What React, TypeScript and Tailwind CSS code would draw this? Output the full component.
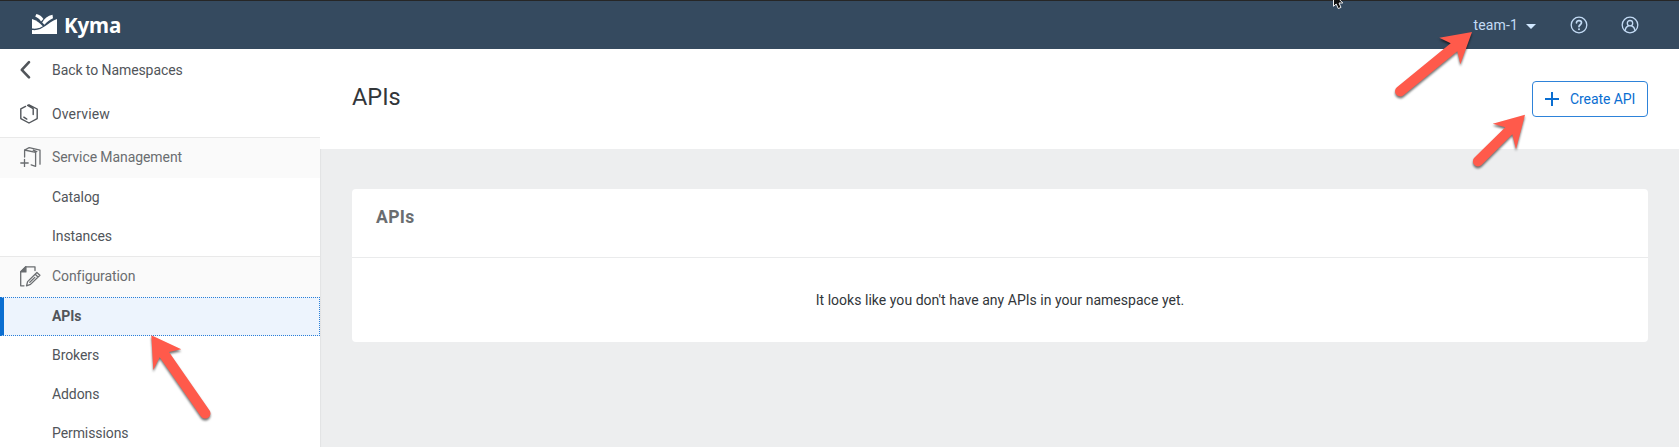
import type { ReactNode } from "react";

const stroke = {
  fill: "none",
  stroke: "currentColor",
  strokeWidth: 1.3,
  strokeLinecap: "round" as const,
  strokeLinejoin: "round" as const,
};

function BackIcon() {
  return (
    <svg width="20" height="20" viewBox="0 0 20 20" {...stroke} strokeWidth={2.6}>
      <path d="M9 2.2 1.8 9.9 9 17.4" />
    </svg>
  );
}

function OverviewIcon() {
  return (
    <svg width="20" height="20" viewBox="0 0 20 20" {...stroke} strokeWidth={1.4}>
      <path d="M5.6 2.4 .8 4.9V14.6L9 19 17.2 14.6V5L9 .8 7.6 1.5 13.2 4.6V10.6M3.8 13.2 6.8 15.1" />
    </svg>
  );
}

function ServiceIcon() {
  return (
    <svg width="21" height="20" viewBox="0 0 21 20" {...stroke}>
      <path d="M4.6 10V3L15.6 5.3V19.3L11.2 17.8M4.6 3 9.2 .7 20 3.1V17.2M16.8 4.6 13.2 3.2M.8 16H8.2M4.5 12.3V19.7" />
    </svg>
  );
}

function ConfigurationIcon() {
  return (
    <svg width="21" height="21" viewBox="0 0 21 21" {...stroke}>
      <path d="M15 4.5V.8H5.8L.7 5.8V19.8H4" />
      <path d="M5.9 .8V5.9H.7Z" fill="currentColor" />
      <path d="M7.6 15.6 16.9 6.5 19.9 9.2 10.5 18.4 6.5 19.8ZM15.2 8.2 18 11M9.8 16.3 14.8 11.4" />
    </svg>
  );
}

function Logo() {
  return (
    <svg width="25" height="20" viewBox="0 0 25 20" fill="#fff">
      <path d="M0 5C4.5 6.2 8 9.4 10.8 12.3C7.8 14.2 4.2 15 0 14.6Z" />
      <path d="M3.2 2.6 4.4 0C7.6 .5 9.9 2.6 11.4 5.1L9 7.4C7.6 5.4 5.7 3.6 3.2 2.6Z" />
      <path d="M10.2 8.5C12.3 4.6 15.7 1.7 20.5 .8L21 4.2C17.8 5.6 14.8 7.7 12.4 10.8Z" />
      <path d="M25 5V20H0V16C10.8 17.3 14.5 9 25 5Z" />
    </svg>
  );
}

function HelpIcon() {
  return (
    <svg width="18" height="18" viewBox="0 0 18 18" {...stroke}>
      <circle cx="9" cy="9" r="7.8" />
      <path d="M6.5 6.8C6.5 3.8 11.5 3.9 11.5 6.8C11.5 8.7 9 8.7 9 10.6" strokeWidth={1.7} />
      <path d="M9 13.1V13.3" strokeWidth={1.9} />
    </svg>
  );
}

function UserIcon() {
  return (
    <svg width="18" height="18" viewBox="0 0 18 18" {...stroke}>
      <circle cx="9" cy="9" r="7.8" />
      <circle cx="9" cy="7.2" r="2.7" />
      <path d="M4.2 14.3C4.4 11.4 6.2 10.2 7.6 9.6M10.4 9.6C11.8 10.2 13.6 11.4 13.8 14.3" />
    </svg>
  );
}

function Heading({ icon, children }: { icon: ReactNode; children: ReactNode }) {
  return (
    <div className="flex h-[41px] items-center border-t border-[#e9e9e9] bg-[#fafafa] pb-[2px] pl-5 text-[#6a6d70]">
      <span className="w-8 shrink-0">{icon}</span>
      {children}
    </div>
  );
}

function Item({ children }: { children: ReactNode }) {
  return <div className="flex h-[39px] items-center pl-[52px]">{children}</div>;
}

function Annotations() {
  return (
    <svg
      className="pointer-events-none absolute left-0 top-0"
      width="1679"
      height="447"
      viewBox="0 0 1679 447"
    >
      <g fill="#ff5a4b" className="drop-shadow-[0_2px_1px_rgba(0,0,0,0.55)]">
        <path d="M151.3 335.3 181.3 349.3 169 352 209.6 410.5A5.2 5.2 0 0 1 200.8 416.2L159.7 357.3 153.3 370Z" />
        <path d="M1472 32 1439.3 37.7 1450.7 43.3 1396.9 87.2A5 5 0 0 0 1403.5 95.2L1457.3 51.3 1460.3 64.3Z" />
        <path d="M1525 114.7 1492.7 123.7 1505.3 127.3 1474.5 157.6A5 5 0 0 0 1481.5 165L1512.3 134.3 1516 149.3Z" />
      </g>
      <path
        d="M1333.5-6V6.3L1336.2 4 1338.3 8.6 1341 7.4 1339 3H1342.8L1334 -6Z"
        fill="#111"
        stroke="#eee"
        strokeWidth="1"
      />
    </svg>
  );
}

export default function App() {
  return (
    <div className="relative flex h-[447px] w-[1679px] flex-col overflow-hidden bg-[#edeeef] font-['Roboto','Liberation_Sans',sans-serif] text-[14px] text-[#51555a]">
      <header className="flex h-[49px] shrink-0 items-center border-t border-[#262626] bg-[#354a5f] pl-8 pr-[40px]">
        <span className="mb-[2px]"><Logo /></span>
        <span className="ml-[7px] mt-px font-['Noto_Sans',sans-serif] text-[20.5px] font-bold leading-none tracking-[-0.1px] text-white">
          Kyma
        </span>
        <div className="ml-auto flex items-center text-[#c3dbf5]">
          <span className="mt-px tracking-[0.15px]">team-1</span>
          <svg className="ml-2 mt-[2px]" width="10" height="5" viewBox="0 0 10 5" fill="#d1e8ff">
            <path d="M0 0H10L5 5Z" />
          </svg>
          <span className="ml-[34px] mb-px"><HelpIcon /></span>
          <span className="ml-[33px]"><UserIcon /></span>
        </div>
      </header>

      <div className="flex min-h-0 flex-1">
        <nav className="w-[320px] shrink-0 bg-white tracking-[-0.08px] shadow-[1px_0_1px_rgba(0,0,0,0.04)]">
          <div className="flex h-[42px] items-center pl-5">
            <span className="w-8"><BackIcon /></span>
            Back to Namespaces
          </div>
          <div className="flex h-[46px] items-center pl-5">
            <span className="w-8"><OverviewIcon /></span>
            <span className="tracking-[0.15px]">Overview</span>
          </div>
          <Heading icon={<ServiceIcon />}>Service Management</Heading>
          <Item>Catalog</Item>
          <Item>Instances</Item>
          <Heading icon={<ConfigurationIcon />}>Configuration</Heading>
          <div className="flex h-[39px] items-center border border-l-4 border-dotted border-[#2a7fd8] border-l-[#0a6ed1] bg-[#edf4fd] pl-12 font-bold [border-left-style:solid]">
            APIs
          </div>
          <Item>Brokers</Item>
          <Item>Addons</Item>
          <Item>Permissions</Item>
        </nav>

        <main className="flex flex-1 flex-col">
          <div className="flex h-[100px] items-start justify-between bg-white pl-8 pr-[31px]">
            <h1 className="mt-[33px] text-[23.5px] leading-[30px] text-[#32363a]">APIs</h1>
            <button className="mt-8 flex h-[36px] w-[116px] items-center rounded-[4px] border border-[#2e83d9] pl-3 text-[#0a6ed1]">
              <svg width="14" height="14" viewBox="0 0 14 14" stroke="currentColor" strokeWidth="2">
                <path d="M7 0V14M0 7H14" />
              </svg>
              <span className="ml-[11px] mt-px whitespace-nowrap tracking-[-0.08px]">Create API</span>
            </button>
          </div>
          <section className="ml-8 mr-[31px] mt-10 h-[153px] rounded-[4px] bg-white">
            <h2 className="h-[69px] border-b border-[#eaebec] pl-6 pt-4 text-[17.5px] font-bold leading-6 tracking-[0.4px] text-[#6a6d70]">
              APIs
            </h2>
            <p className="flex h-[84px] items-center justify-center tracking-[0.03px] text-[#32363a]">
              It looks like you don't have any APIs in your namespace yet.
            </p>
          </section>
        </main>
      </div>
      <Annotations />
    </div>
  );
}
